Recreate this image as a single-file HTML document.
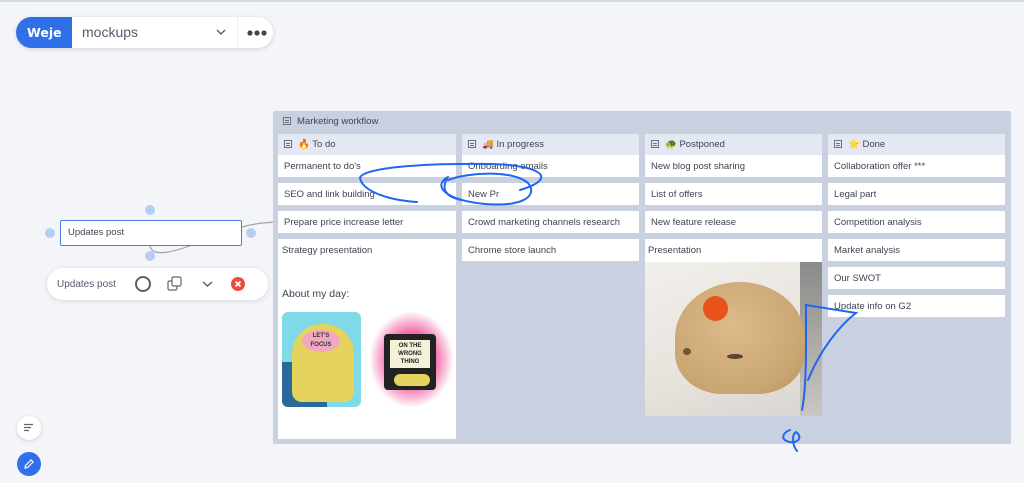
<!DOCTYPE html>
<html><head><meta charset="utf-8"><style>
*{box-sizing:border-box;margin:0;padding:0}
body{width:1024px;height:483px;overflow:hidden;background:#f4f5f9;font-family:"Liberation Sans",sans-serif;position:relative;color:#3c4250}
.a{position:absolute}
.card{position:absolute;background:#fff;font-size:9.5px;color:#3f4452;padding:0 6px;line-height:23px;height:22px;white-space:nowrap}
.hdr{position:absolute;background:#e3e8f3;height:21px;font-size:9.5px;line-height:21px;padding-left:6px;color:#3f4452}
.ic{display:inline-block;width:8px;height:8px;border:1px solid #6b7180;vertical-align:-1px;margin-right:6px;background:linear-gradient(#6b7180,#6b7180) 1px 2px/4px 1px no-repeat,linear-gradient(#6b7180,#6b7180) 1px 4px/4px 1px no-repeat}
.dot{position:absolute;width:10px;height:10px;border-radius:50%;background:#b6cdf3}
</style></head><body>
<div class="a" style="left:0;top:0;width:1024px;height:2px;background:#d4d9e6"></div>

<div class="a" style="left:16px;top:17px;width:257px;height:31px;border-radius:16px;background:#fff;box-shadow:0 1px 5px rgba(0,0,0,.15);overflow:hidden">
 <div class="a" style="left:0;top:0;width:56px;height:31px;background:#2f6fe8;color:#fff;font-weight:bold;font-size:12.5px;line-height:31px;padding-left:11px;font-family:'DejaVu Sans',sans-serif">Weje</div>
 <div class="a" style="left:66px;top:0;line-height:31px;font-size:14px;color:#555b6b">mockups</div>
 <svg class="a" style="left:200px;top:11px" width="10" height="8"><path d="M1 2 L5 6 L9 2" stroke="#555" stroke-width="1.3" fill="none"/></svg>
 <div class="a" style="left:221px;top:0;width:1px;height:31px;background:#eceef3"></div>
 <svg class="a" style="left:231px;top:12px" width="20" height="8"><circle cx="3" cy="4" r="2.6" fill="#444"/><circle cx="10" cy="4" r="2.6" fill="#444"/><circle cx="17" cy="4" r="2.6" fill="#444"/></svg>
</div>

<svg class="a" style="left:0;top:0" width="300" height="300"><path d="M150 246 C152 258 175 252 200 242 C230 230 250 222 280 222" stroke="#a0a4ad" stroke-width="1.2" fill="none"/></svg>
<div class="dot" style="left:145px;top:205px"></div>
<div class="dot" style="left:45px;top:228px"></div>
<div class="dot" style="left:246px;top:228px"></div>
<div class="dot" style="left:145px;top:251px"></div>
<div class="a" style="left:60px;top:220px;width:182px;height:26px;border:1.5px solid #4a7fe0;border-radius:2px;background:#fff;font-size:9.5px;line-height:24px;padding-left:7px;color:#3f4452">Updates post</div>
<div class="a" style="left:47px;top:268px;width:221px;height:32px;border-radius:16px;background:#fff;box-shadow:0 1px 6px rgba(0,0,0,.12)">
 <div class="a" style="left:10px;top:1px;line-height:32px;font-size:10px;color:#555b6b">Updates post</div>
 <div class="a" style="left:88px;top:8px;width:16px;height:16px;border-radius:50%;border:2px solid #5b6070"></div>
 <svg class="a" style="left:120px;top:8px" width="16" height="16"><rect x="1" y="5" width="9" height="9" rx="1.5" fill="none" stroke="#666" stroke-width="1.2"/><rect x="5" y="1" width="9" height="9" rx="1.5" fill="#fff" stroke="#666" stroke-width="1.2"/></svg>
 <svg class="a" style="left:155px;top:12px" width="11" height="8"><path d="M1 2 L5.5 6 L10 2" stroke="#555" stroke-width="1.3" fill="none"/></svg>
 <div class="a" style="left:184px;top:9px;width:14px;height:14px;border-radius:50%;background:#e84c3d"></div>
 <svg class="a" style="left:184px;top:9px" width="14" height="14"><path d="M4.5 4.5 L9.5 9.5 M9.5 4.5 L4.5 9.5" stroke="#fff" stroke-width="1.8"/></svg>
</div>

<div class="a" style="left:17px;top:416px;width:24px;height:24px;border-radius:50%;background:#fff;box-shadow:0 1px 4px rgba(0,0,0,.15)"></div>
<svg class="a" style="left:23px;top:423px" width="12" height="10"><path d="M1 1.5H10M1 4.5H8M1 7.5H6" stroke="#666" stroke-width="1.3"/></svg>
<div class="a" style="left:17px;top:452px;width:24px;height:24px;border-radius:50%;background:#2f6fe8"></div>
<svg class="a" style="left:23px;top:458px" width="12" height="12"><path d="M2 10 L2.5 7.5 L8 2 L10 4 L4.5 9.5 Z" stroke="#fff" stroke-width="1.2" fill="none"/></svg>

<div class="a" style="left:273px;top:111px;width:738px;height:333px;background:#c9d0df;border-radius:2px"></div>
<div class="a" style="left:283px;top:115px;font-size:9.5px;line-height:13px;color:#3f4452"><span class="ic"></span>Marketing workflow</div>

<div class="hdr" style="left:278px;top:134px;width:178px"><span class="ic"></span>🔥 To do</div>
<div class="hdr" style="left:462px;top:134px;width:177px"><span class="ic"></span>🚚 In progress</div>
<div class="hdr" style="left:645px;top:134px;width:177px"><span class="ic"></span>🐢 Postponed</div>
<div class="hdr" style="left:828px;top:134px;width:177px"><span class="ic"></span>⭐ Done</div>

<div class="card" style="left:278px;top:155px;width:178px">Permanent to do's</div>
<div class="card" style="left:278px;top:183px;width:178px">SEO and link building</div>
<div class="card" style="left:278px;top:211px;width:178px">Prepare price increase letter</div>
<div class="card" style="left:278px;top:239px;width:178px;height:200px;padding-left:4px">Strategy presentation
 <div class="a" style="left:4px;top:48px;font-size:10.5px;line-height:14px">About my day:</div>
 <div class="a" style="left:4px;top:73px;width:79px;height:95px;background:#7fd9e6;border-radius:6px;overflow:hidden">
  <div class="a" style="left:0;top:50px;width:45px;height:45px;background:#2a6a9a"></div>
  <div class="a" style="left:10px;top:12px;width:62px;height:78px;background:#e4d35d;border-radius:30px 30px 10px 10px"></div>
  <div class="a" style="left:20px;top:18px;width:38px;height:22px;background:#f1a8c0;border-radius:50%;font-size:6px;line-height:9px;text-align:center;padding-top:2px;color:#333;font-weight:bold">LET'S<br>FOCUS</div>
 </div>
 <div class="a" style="left:92px;top:73px;width:83px;height:95px;background:radial-gradient(#f06aa8 40%,#fff 72%)">
  <div class="a" style="left:14px;top:22px;width:52px;height:56px;background:#222;border-radius:4px"></div>
  <div class="a" style="left:20px;top:28px;width:40px;height:28px;background:#f5f0d8;font-size:6px;line-height:8px;text-align:center;font-weight:bold;color:#222;padding-top:2px">ON THE<br>WRONG<br>THING</div>
  <div class="a" style="left:24px;top:62px;width:36px;height:12px;background:#e4d35d;border-radius:6px"></div>
 </div>
</div>

<div class="card" style="left:462px;top:155px;width:177px">Onboarding emails</div>
<div class="card" style="left:462px;top:183px;width:177px">New Pr</div>
<div class="card" style="left:462px;top:211px;width:177px">Crowd marketing channels research</div>
<div class="card" style="left:462px;top:239px;width:177px">Chrome store launch</div>

<div class="card" style="left:645px;top:155px;width:177px">New blog post sharing</div>
<div class="card" style="left:645px;top:183px;width:177px">List of offers</div>
<div class="card" style="left:645px;top:211px;width:177px">New feature release</div>
<div class="card" style="left:645px;top:239px;width:177px;height:177px;padding-left:3px">Presentation
 <div class="a" style="left:0;top:23px;width:177px;height:154px;background:linear-gradient(160deg,#f2f0ec 0%,#e6e2dc 60%,#d8d4cf 100%);overflow:hidden">
  <div class="a" style="left:155px;top:0;width:22px;height:154px;background:linear-gradient(#8a8a88,#c9c7c3)"></div>
  <div class="a" style="left:30px;top:20px;width:130px;height:112px;background:radial-gradient(ellipse at 45% 40%,#dcbb8b,#c9a571 70%,#b8945f);border-radius:55% 55% 40% 40%"></div>
  <div class="a" style="left:58px;top:34px;width:25px;height:25px;border-radius:50%;background:#e8541c"></div>
  <div class="a" style="left:82px;top:92px;width:16px;height:5px;background:#5a4630;border-radius:50%"></div>
  <div class="a" style="left:38px;top:86px;width:8px;height:7px;background:#6b5638;border-radius:50%"></div>
 </div>
</div>

<div class="card" style="left:828px;top:155px;width:177px">Collaboration offer ***</div>
<div class="card" style="left:828px;top:183px;width:177px">Legal part</div>
<div class="card" style="left:828px;top:211px;width:177px">Competition analysis</div>
<div class="card" style="left:828px;top:239px;width:177px">Market analysis</div>
<div class="card" style="left:828px;top:267px;width:177px">Our SWOT</div>
<div class="card" style="left:828px;top:295px;width:177px">Update info on G2</div>

<svg class="a" style="left:0;top:0" width="1024" height="483" fill="none" stroke="#1f66f2" stroke-width="2" stroke-linecap="round">
<path d="M417 202 C385 200 362 190 360 178 C362 168 420 163 490 164 C540 165 560 178 520 190"/>
<path d="M448 177 C432 186 445 200 485 204 C525 207 538 195 528 183 C512 170 470 172 448 180"/>
<path d="M447 178 C441 190 446 197 462 200"/>
<path d="M802 410 C805 395 806 370 806 345 L806 305 L856 313 C840 325 820 350 808 380"/>
<path d="M790 430 C782 433 780 440 790 442 C800 443 802 436 796 432 C792 434 792 445 797 451"/>
</svg>
</body></html>
